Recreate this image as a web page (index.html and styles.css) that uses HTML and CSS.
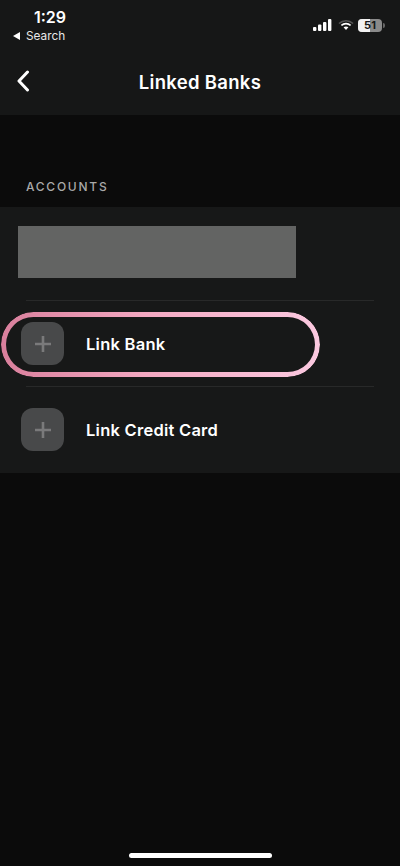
FILE: index.html
```html
<!DOCTYPE html>
<html>
<head lang="en">
    <meta charset="UTF-8">
    <title>Linked Banks</title>
    <link rel="stylesheet" href="styles.css">
</head>
<body>
<div class="screen">
    <div class="header">
        <div class="statusBar">
            <div class="statusLeft">
                <div class="time">1:29</div>
                <div class="backApp"><span class="backTri"></span>Search</div>
            </div>
            <div class="statusRight">
                <svg class="signal" width="19" height="12" viewBox="0 0 19 12"><rect x="0" y="8" width="3.4" height="4" rx="1" fill="#fff"/><rect x="5" y="5.5" width="3.4" height="6.5" rx="1" fill="#fff"/><rect x="10" y="3" width="3.4" height="9" rx="1" fill="#fff"/><rect x="15" y="0" width="3.4" height="12" rx="1" fill="#fff"/></svg>
                <svg class="wifi" width="16" height="12" viewBox="0 0 17 12"><path d="M1 4.4C5.2.5 11.8.5 16 4.4" fill="none" stroke="#555" stroke-width="1.6"/><path d="M3.6 6.4C6.4 3.9 10.6 3.9 13.4 6.4" fill="none" stroke="#fff" stroke-width="1.7"/><path d="M5.9 8.4C7.4 7.2 9.6 7.2 11.1 8.4L8.5 11.4Z" fill="#fff"/></svg>
                <div class="battery">
                    <div class="batteryBody"><div class="batteryFill"></div><span class="batteryNum">51</span></div>
                    <div class="batteryCap"></div>
                </div>
            </div>
        </div>
        <div class="navBar">
            <svg class="backIcon" width="14" height="22" viewBox="0 0 14 22"><path d="M11.5 2L3 11l8.5 9" fill="none" stroke="#fff" stroke-width="3" stroke-linecap="round" stroke-linejoin="round"/></svg>
            <div class="navTitle">Linked Banks</div>
        </div>
    </div>
    <div class="sectionHead">ACCOUNTS</div>
    <div class="list">
        <div class="redacted"></div>
        <div class="row rowFirst">
            <div class="plusBox"><svg width="18" height="18" viewBox="0 0 18 18"><path d="M9 1v16M1 9h16" stroke="#7a7a7b" stroke-width="2.6"/></svg></div>
            <div class="rowText">Link Bank</div>
            <div class="highlight"></div>
        </div>
        <div class="row">
            <div class="plusBox"><svg width="18" height="18" viewBox="0 0 18 18"><path d="M9 1v16M1 9h16" stroke="#7a7a7b" stroke-width="2.6"/></svg></div>
            <div class="rowText">Link Credit Card</div>
        </div>
    </div>
    <div class="homeBar"></div>
</div>
</body>
</html>
```

FILE: styles.css
```css
*{padding: 0;margin: 0;box-sizing: border-box;}
html,body{
    width: 400px;
    height: 866px;
    overflow: hidden;
    background: #0b0b0b;
}
.screen{
    position: relative;
    display: flex;
    flex-direction: column;
    width: 400px;
    height: 866px;
    font-family: Inter, "Liberation Sans", sans-serif;
    color: #fff;
}
.header{
    height: 115px;
    background: #161717;
}
.statusBar{
    display: flex;
    justify-content: space-between;
    height: 46px;
    padding: 8px 15px 0 13px;
}
.statusLeft{
    display: flex;
    flex-direction: column;
    align-items: flex-start;
}
.time{
    font-size: 16px;
    font-weight: 600;
    line-height: 18px;
    margin-left: 21px;
}
.backApp{
    display: flex;
    align-items: center;
    font-size: 11.8px;
    line-height: 14px;
    margin-top: 3px;
    color: #e8e8e8;
}
.backTri{
    width: 0;
    height: 0;
    margin-right: 6px;
    border-top: 4px solid transparent;
    border-bottom: 4px solid transparent;
    border-right: 7px solid #fff;
}
.statusRight{
    display: flex;
    align-items: center;
    gap: 5px;
    height: 18px;
    margin-top: 8px;
}
.signal{
    margin-right: 1px;
}
.battery{
    display: flex;
    align-items: center;
    margin-left: -1px;
}
.batteryBody{
    position: relative;
    width: 24px;
    height: 13px;
    border-radius: 4px;
    background: #8a8a8a;
    overflow: hidden;
}
.batteryFill{
    width: 12px;
    height: 13px;
    background: #f2f2f2;
}
.batteryNum{
    position: absolute;
    left: 0;
    top: 0;
    width: 24px;
    text-align: center;
    font-size: 11px;
    font-weight: 700;
    line-height: 13px;
    color: #161717;
}
.batteryCap{
    width: 2px;
    height: 5px;
    margin-left: 1px;
    border-radius: 0 2px 2px 0;
    background: #666;
}
.navBar{
    position: relative;
    display: flex;
    align-items: center;
    justify-content: center;
    height: 69px;
    padding-top: 2px;
}
.backIcon{
    position: absolute;
    left: 16px;
    top: 24px;
}
.navTitle{
    font-size: 18.5px;
    font-weight: 600;
    letter-spacing: .3px;
}
.sectionHead{
    height: 92px;
    padding: 65px 0 0 26px;
    font-size: 12px;
    font-weight: 500;
    line-height: 14px;
    letter-spacing: 1.75px;
    color: #a9a9a9;
}
.list{
    height: 266px;
    padding-top: 19px;
    background: #171818;
}
.redacted{
    width: 278px;
    height: 52px;
    margin-left: 18px;
    background: #636463;
}
.row{
    position: relative;
    display: flex;
    align-items: center;
    gap: 22px;
    height: 86px;
    margin-left: 26px;
    margin-right: 26px;
    border-top: 1px solid #282929;
}
.rowFirst{
    margin-top: 22px;
}
.plusBox{
    display: flex;
    align-items: center;
    justify-content: center;
    flex-shrink: 0;
    width: 43px;
    height: 43px;
    margin-left: -5px;
    border-radius: 12px;
    background: #48494a;
}
.rowText{
    font-size: 16.5px;
    font-weight: 600;
    letter-spacing: .25px;
}
/* pink ring drawn over the row */
.highlight{
    position: absolute;
    left: -25px;
    top: 11px;
    width: 319px;
    height: 65px;
    border-radius: 33px;
    padding: 5px;
    background: linear-gradient(90deg, #d97f9c 0%, #f3a8c1 45%, #fbc9e0 100%);
    -webkit-mask: linear-gradient(#000 0 0) content-box, linear-gradient(#000 0 0);
    -webkit-mask-composite: xor;
    mask-composite: exclude;
}
.homeBar{
    position: absolute;
    left: 129px;
    bottom: 8px;
    width: 143px;
    height: 5px;
    border-radius: 3px;
    background: #fff;
}
```
